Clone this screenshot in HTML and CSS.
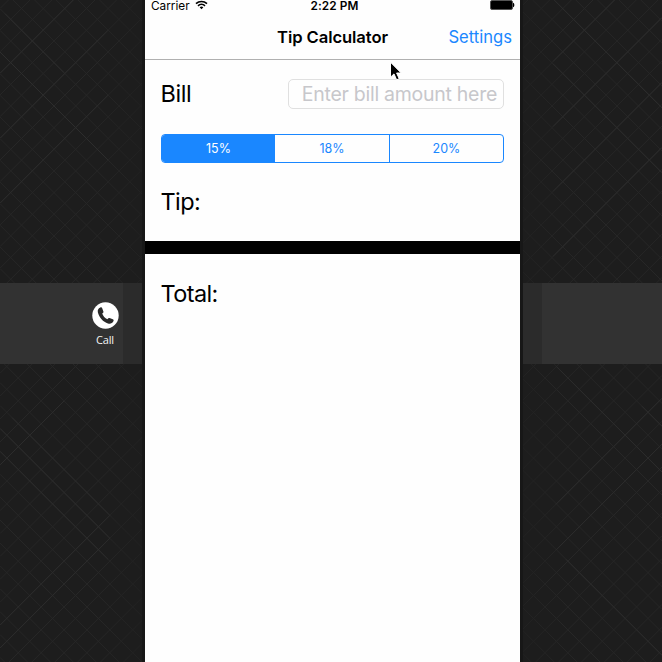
FILE: index.html
```
<!DOCTYPE html>
<html lang="en">
<head>
<meta charset="utf-8">
<title>Tip Calculator</title>
<link rel="stylesheet" href="styles.css">
</head>
<body>
<svg class="backdrop" viewBox="0 0 662 662" aria-hidden="true">
  <defs>
    <clipPath id="top"><rect width="662" height="283"/></clipPath>
    <clipPath id="bottom"><rect y="364" width="662" height="298"/></clipPath>
    <linearGradient id="fade"><stop offset=".15" stop-color="#1d1d1d" stop-opacity="0"/><stop offset=".21" stop-color="#1d1d1d" stop-opacity=".5"/><stop offset=".79" stop-color="#1d1d1d" stop-opacity=".5"/><stop offset=".85" stop-color="#1d1d1d" stop-opacity="0"/></linearGradient>
  </defs>
  <path id="upper" class="mesh" clip-path="url(#top)"/>
  <path id="lower" class="mesh" clip-path="url(#bottom)"/>
  <path class="glints" d="M5 13.7L64 72.7M0 52L108 160M0 73.3L73.3 0M0 138.3L108 30.3M0 203.2L108 95.2M554.2 0L662 107.8M553 63.7L662 172.7M553 61.5L614.5 0M553 126.5L662 17.5M553 191.4L662 82.4M553 256.4L662 147.4M0 428.4L110 538.4M12 417.5L110 515.5M0 451.3L108 559.3M0 464.9L64 400.9M0 648.1L110 538.1M0 625.2L110 515.2M556 366.1L662 472.1M642 406.3L662 426.3M556 504.3L662 398.3M556 550.1L662 444.1M566 559.3L662 655.3"/>
  <rect width="662" height="662" fill="url(#fade)"/>
</svg>
<main class="stage">
  <aside class="side left">
    <div class="band">
      <div class="call">
        <svg width="27" height="27" viewBox="0 0 27 27"><circle cx="13.5" cy="13.5" r="13.2" fill="#fff"/><path d="M8.3 5.5C6.3 6.4 5.3 8.2 5.9 10.5C7.1 15.5 11.2 20 16 21.5C18.5 22.2 20.5 21.1 21.5 19C21.9 18.1 21.5 17.5 20.8 17.2L17.5 16.1C16.7 15.9 16.1 16.4 15.4 17.2C12.9 16 11.1 13.9 10.2 11.4C11.4 10.8 11.6 10.3 11.4 9.5L10.2 6.2C9.9 5.3 9.2 5.1 8.3 5.5Z" fill="#292929"/></svg>
        <span>Call</span>
      </div>
      <div class="edge"></div>
    </div>
  </aside>
  <section class="phone">
    <header>
      <div class="status">
        <div class="carrier"><span>Carrier</span><svg width="13" height="10" viewBox="0 0 13 10"><path d="M1 3.7C4.2.7 8.8.7 12 3.7M3 5.8C5 3.9 8 3.9 10 5.8" fill="none" stroke="#000" stroke-width="1.6"/><path d="M4.6 7.3Q6.5 5.8 8.4 7.3L6.5 9.3Z"/></svg></div>
        <time>2:22 PM</time>
        <svg class="battery" width="25" height="10" viewBox="0 0 25 10"><rect x=".5" y=".5" width="22" height="9" rx="1.5" fill="#000" stroke="#555"/><path d="M23 2.8C24.8 3.1 24.8 6.9 23 7.2Z"/></svg>
      </div>
      <div class="nav"><span></span><h1>Tip Calculator</h1><a>Settings</a></div>
      <svg class="cursor" width="14" height="22" viewBox="0 0 14 22"><path d="M1.5 1.2V16.2L5 12.9L7.6 18.8L10.2 17.7L7.6 12H12.2Z" fill="#000" stroke="#fff" stroke-width="1"/></svg>
    </header>
    <div class="bill"><label>Bill</label><div class="field">Enter bill amount here</div></div>
    <div class="segments"><span class="on">15%</span><span>18%</span><span>20%</span></div>
    <div class="tip">Tip:</div>
    <div class="rule"></div>
    <div class="total">Total:</div>
  </section>
  <aside class="side right"><div class="band"><div class="edge"></div></div></aside>
</main>
<script src="mesh.js"></script>
</body>
</html>
```
FILE: styles.css
```
* { box-sizing: border-box; }
body { margin: 0; width: 662px; height: 662px; overflow: hidden; background: #1d1d1d; font-family: Inter, "Liberation Sans", sans-serif; color: #000; }
svg { display: block; }
.backdrop { position: absolute; inset: 0; width: 662px; height: 662px; }
.mesh { stroke: #272727; stroke-width: 1; fill: none; }
.glints { stroke: #2d2d2d; stroke-width: 1; fill: none; }
.stage { position: relative; display: grid; grid-template-columns: 145px 375px 142px; height: 662px; }
.side { padding-top: 283px; }
.left { border-right: 3px solid #171717; }
.right { border-left: 3px solid #171717; }
.band { display: flex; height: 81px; background: #323232; }
.left .band { justify-content: flex-end; }
.edge { width: 19px; background: #2b2b2b; }
.call { width: 37px; padding: 19px 0 0 2px; display: flex; flex-direction: column; align-items: center; gap: 4px; color: #f4f4f4; font: 11px/14px "Open Sans", sans-serif; }
.call span { margin-right: 1px; letter-spacing: -.2px; }
.phone { background: #fefefe; }
header { position: relative; height: 60px; border-bottom: 1px solid #b0b0b0; }
.status { display: grid; grid-template-columns: 1fr auto 1fr; height: 14px; padding: 0 5px 0 6px; font-size: 11.8px; line-height: 12px; }
.carrier { display: flex; gap: 5px; }
time { font-weight: 600; font-size: 11.8px; margin-left: 3px; letter-spacing: .1px; }
.battery { justify-self: end; }
.nav { display: grid; grid-template-columns: 1fr auto 1fr; align-items: center; height: 46px; padding: 0 8px; }
h1 { margin: 0; font-size: 16.6px; font-weight: 600; letter-spacing: -.08px; line-height: 22px; }
.nav a { justify-self: end; color: #1a87ff; font-size: 16.6px; letter-spacing: 0; }
.cursor { position: absolute; left: 244px; top: 61px; }
.bill { display: flex; align-items: center; justify-content: space-between; padding: 19px 16px 0; }
.bill label, .tip, .total { font-size: 23.5px; line-height: 30px; letter-spacing: -.6px; text-indent: -.5px; }
.bill label { letter-spacing: -.4px; }
.field { width: 216px; height: 30px; border: 1px solid #e0e0e0; border-radius: 5px; padding-right: 6px; text-align: right; font-size: 19.5px; line-height: 28px; letter-spacing: -.27px; color: #c7c7cb; white-space: nowrap; }
.segments { display: grid; grid-template-columns: 113px 114px 1fr; height: 29px; margin: 25px 16px 0; border: 1px solid #1a87ff; border-radius: 4px; overflow: hidden; color: #1a87ff; font-size: 12.5px; line-height: 28px; text-align: center; }
.segments span + span + span { border-left: 1px solid #1a87ff; }
.segments .on { background: #1a87ff; color: #fff; }
.tip { margin: 24px 16px; }
.rule { height: 13px; background: #000; }
.total { margin: 25px 16px 0; }
```
FILE: mesh.js
```
// Diagonal lines in both directions, one every `step` pixels, through (x, y).
function drawMesh(id, x, y, step) {
  let d = "";
  for (let i = -70; i < 70; i++) {
    const down = y - x + i * step;
    const up = y + x + i * step;
    d += `M0 ${down}L662 ${down + 662}M0 ${up}L662 ${up - 662}`;
  }
  document.getElementById(id).setAttribute("d", d);
}
drawMesh("upper", 10.7, 19.4, 21.65);
drawMesh("lower", 6.8, 412.3, 22.9);
```
